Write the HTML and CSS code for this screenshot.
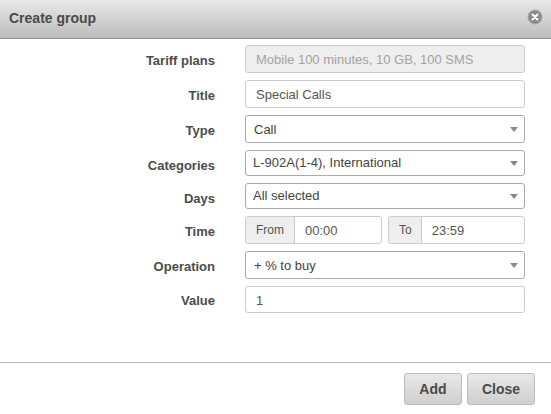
FILE: index.html
```html
<!DOCTYPE html>
<html lang="en">

<head>
    <meta charset="UTF-8">
    <meta name="viewport" content="width=device-width, initial-scale=1.0">
    <title>Create group</title>
    <link rel="stylesheet" href="styles.css">
</head>

<body>
    <div class="modal">
        <div class="modal-header">
            <span class="modal-title">Create group</span>
            <svg class="modal-close" width="16" height="16" viewBox="0 0 16 16">
                <circle cx="8" cy="8" r="7" fill="#8a8a8a" stroke="#a8a8a8" stroke-width="1"/>
                <path d="M5.5 5.5 L10.5 10.5 M10.5 5.5 L5.5 10.5" stroke="#fff" stroke-width="2" stroke-linecap="round"/>
            </svg>
        </div>
        <div class="modal-body">
            <div class="row">
                <div class="label">Tariff plans</div>
                <div class="field disabled">Mobile 100 minutes, 10 GB, 100 SMS</div>
            </div>
            <div class="row">
                <div class="label">Title</div>
                <div class="field">Special Calls</div>
            </div>
            <div class="row">
                <div class="label">Type</div>
                <div class="field select">Call<span class="caret"></span></div>
            </div>
            <div class="row row-short">
                <div class="label">Categories</div>
                <div class="field select">L-902A(1-4), International<span class="caret"></span></div>
            </div>
            <div class="row row-short">
                <div class="label">Days</div>
                <div class="field select">All selected<span class="caret"></span></div>
            </div>
            <div class="row">
                <div class="label">Time</div>
                <div class="time-group">
                    <div class="input-group group-from">
                        <span class="addon">From</span>
                        <span class="group-value">00:00</span>
                    </div>
                    <div class="input-group group-to">
                        <span class="addon">To</span>
                        <span class="group-value">23:59</span>
                    </div>
                </div>
            </div>
            <div class="row">
                <div class="label">Operation</div>
                <div class="field select">+ % to buy<span class="caret"></span></div>
            </div>
            <div class="row row-value">
                <div class="label">Value</div>
                <div class="field">1</div>
            </div>
        </div>
        <div class="modal-footer">
            <button class="btn btn-add">Add</button>
            <button class="btn">Close</button>
        </div>
    </div>
</body>

</html>
```

FILE: styles.css
```css
* {
    margin: 0;
    padding: 0;
    box-sizing: border-box;
}

body {
    background: #fff;
    font-family: "Liberation Sans", Arial, sans-serif;
    font-size: 13px;
    color: #444;
}

.modal {
    width: 551px;
    height: 414px;
    display: flex;
    flex-direction: column;
    overflow: hidden;
}

.modal-header {
    height: 39px;
    padding: 0 8px 4px 9px;
    display: flex;
    align-items: center;
    justify-content: space-between;
    background: linear-gradient(#e9e9e9, #bcbcbc);
    border-bottom: 1px solid #8f8f8f;
}

.modal-title {
    padding-top: 1px;
    font-size: 14px;
    font-weight: bold;
    color: #4a4a4a;
}

.modal-body {
    height: 324px;
    padding: 6px 26px 0 0;
    display: flex;
    flex-direction: column;
    gap: 7px;
    border-bottom: 1px solid #b5b5b5;
}

.row {
    display: flex;
    align-items: center;
    height: 28px;
}

.row-short {
    height: 26px;
}

.row-value {
    height: 27px;
}

.label {
    width: 215px;
    padding-top: 2px;
    text-align: right;
    font-weight: bold;
    color: #4c4c4c;
}

.field,
.input-group {
    height: 100%;
    margin-left: 30px;
    flex: 1;
    display: flex;
    align-items: center;
    background: #fff;
    border: 1px solid #ccc;
    border-radius: 3px;
    padding: 0 10px;
    font-size: 13px;
    color: #555;
}

.disabled {
    background: #eee;
    color: #a3a3a3;
}

.select {
    position: relative;
    padding-left: 8px;
    color: #444;
    border-color: #aaa;
}

.row-short .select {
    padding: 0 10px 2px 7px;
}

.row-short .label {
    padding-top: 4px;
}

.row-value .label,
.row-value .field {
    padding-top: 1px;
}

.caret {
    position: absolute;
    right: 6px;
    top: 50%;
    margin-top: -2px;
    border-left: 4px solid transparent;
    border-right: 4px solid transparent;
    border-top: 5px solid #888;
}

.time-group {
    flex: 1;
    height: 100%;
    margin-left: 30px;
    display: flex;
    gap: 6px;
}

.input-group {
    margin-left: 0;
    padding: 0;
    overflow: hidden;
}

.group-from {
    flex: none;
    width: 137px;
}

.addon {
    height: 100%;
    display: flex;
    align-items: center;
    padding: 0 10px;
    font-size: 12px;
    background: #eee;
    border-right: 1px solid #ccc;
}

.group-to .addon {
    padding-right: 9px;
}

.group-value {
    padding-left: 10px;
}

.modal-footer {
    flex: 1;
    padding: 10px 16px 0 0;
    display: flex;
    justify-content: flex-end;
    align-items: flex-start;
    gap: 5px;
}

.btn {
    height: 32px;
    padding: 0 14px;
    font-family: inherit;
    font-size: 14px;
    font-weight: bold;
    color: #4a4a4a;
    background: linear-gradient(#e8e8e8, #cfcfcf);
    border: 1px solid #bbb;
    border-radius: 3px;
}

.btn-add {
    width: 58px;
}
```
